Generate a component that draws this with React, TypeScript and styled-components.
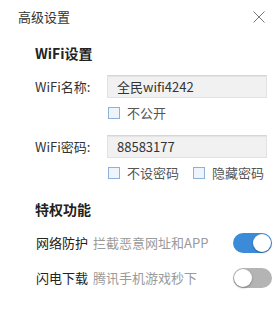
import styled, { createGlobalStyle } from "styled-components";
import { useState } from "react";

const GlobalStyle = createGlobalStyle`
  body {
    margin: 0;
    background: #ffffff;
    font-family: "Noto Sans CJK SC", "Noto Sans", sans-serif;
    color: #333333;
  }
`;

const Panel = styled.div`
  width: 280px;
  height: 310px;
  background: #ffffff;
  display: flex;
  flex-direction: column;
`;

const Header = styled.div`
  height: 34px;
  display: flex;
  align-items: center;
  justify-content: space-between;
  padding: 0 15px 0 18px;
  box-sizing: border-box;
`;

const Title = styled.span`
  font-size: 13px;
  line-height: 18px;
  color: #333;
`;

const CloseButton = styled.button`
  width: 13px;
  height: 13px;
  padding: 0;
  border: none;
  background: transparent;
  display: flex;
  align-items: center;
  justify-content: center;
  cursor: pointer;
`;

const Body = styled.div`
  display: flex;
  flex-direction: column;
  padding: 0 0 0 35px;
`;

const SectionTitle = styled.div<{ $top: number }>`
  margin-top: ${(p) => p.$top}px;
  font-size: 14px;
  font-weight: 700;
  line-height: 20px;
  color: #222;
`;

const FieldRow = styled.div<{ $top: number }>`
  margin-top: ${(p) => p.$top}px;
  display: flex;
  align-items: center;
`;

const Label = styled.span`
  width: 72px;
  font-size: 13px;
  line-height: 18px;
  color: #333;
`;

const Input = styled.input`
  width: 160px;
  height: 23px;
  box-sizing: border-box;
  border: 1px solid #e2e2e2;
  border-top-color: #d6d6d6;
  box-shadow: inset 0 1px 1px rgba(0, 0, 0, 0.06);
  background: #f1f1f1;
  padding: 0 9px;
  font-family: "Noto Sans CJK SC", "Noto Sans", sans-serif;
  font-size: 13px;
  color: #333;
  outline: none;
`;

const OptionRow = styled.div<{ $top: number }>`
  margin-top: ${(p) => p.$top}px;
  margin-left: 73px;
  height: 14px;
  display: flex;
  align-items: center;
  gap: 14px;
`;

const Option = styled.label`
  display: flex;
  align-items: center;
  gap: 7px;
  font-size: 13px;
  line-height: 14px;
  color: #555;
  cursor: pointer;
`;

const Box = styled.span`
  width: 12px;
  height: 12px;
  box-sizing: border-box;
  border: 1px solid #8db1d8;
  background: #eef4fb;
`;

const SwitchRow = styled.div<{ $top: number }>`
  margin-top: ${(p) => p.$top}px;
  height: 20px;
  display: flex;
  align-items: center;
  padding-left: 1px;
  padding-right: 8px;
`;

const SwitchName = styled.span`
  font-size: 13px;
  line-height: 18px;
  color: #222;
`;

const SwitchDesc = styled.span`
  margin-left: 5px;
  font-size: 13px;
  line-height: 18px;
  color: #9a9a9a;
  flex: 1;
`;

const Toggle = styled.button<{ $on: boolean }>`
  position: relative;
  width: 39px;
  height: 20px;
  padding: 0;
  border: none;
  border-radius: 10px;
  background: ${(p) => (p.$on ? "#3c8bd9" : "#b4b4b4")};
  cursor: pointer;
`;

const Knob = styled.span<{ $on: boolean }>`
  position: absolute;
  top: 1px;
  left: ${(p) => (p.$on ? "20px" : "1px")};
  width: 18px;
  height: 18px;
  border-radius: 50%;
  background: #ffffff;
  box-shadow: 0 1px 2px rgba(0, 0, 0, 0.35);
`;

function Check({ text }: { text: string }) {
  return (
    <Option>
      <Box />
      {text}
    </Option>
  );
}

function Switch({ on, onToggle }: { on: boolean; onToggle: () => void }) {
  return (
    <Toggle $on={on} onClick={onToggle}>
      <Knob $on={on} />
    </Toggle>
  );
}

export default function App() {
  const [guard, setGuard] = useState(true);
  const [flash, setFlash] = useState(false);
  return (
    <Panel>
      <GlobalStyle />
      <Header>
        <Title>高级设置</Title>
        <CloseButton>
          <svg width="12" height="12" viewBox="0 0 12 12">
            <path d="M0.5 0.5 L11.5 11.5 M11.5 0.5 L0.5 11.5" stroke="#777" strokeWidth="1" />
          </svg>
        </CloseButton>
      </Header>
      <Body>
        <SectionTitle $top={9}>WiFi设置</SectionTitle>
        <FieldRow $top={12}>
          <Label>WiFi名称:</Label>
          <Input defaultValue="全民wifi4242" />
        </FieldRow>
        <OptionRow $top={8}>
          <Check text="不公开" />
        </OptionRow>
        <FieldRow $top={15}>
          <Label>WiFi密码:</Label>
          <Input defaultValue="88583177" />
        </FieldRow>
        <OptionRow $top={8}>
          <Check text="不设密码" />
          <Check text="隐藏密码" />
        </OptionRow>
        <SectionTitle $top={19}>特权功能</SectionTitle>
        <SwitchRow $top={14}>
          <SwitchName>网络防护</SwitchName>
          <SwitchDesc>拦截恶意网址和APP</SwitchDesc>
          <Switch on={guard} onToggle={() => setGuard(!guard)} />
        </SwitchRow>
        <SwitchRow $top={15}>
          <SwitchName>闪电下载</SwitchName>
          <SwitchDesc>腾讯手机游戏秒下</SwitchDesc>
          <Switch on={flash} onToggle={() => setFlash(!flash)} />
        </SwitchRow>
      </Body>
    </Panel>
  );
}
